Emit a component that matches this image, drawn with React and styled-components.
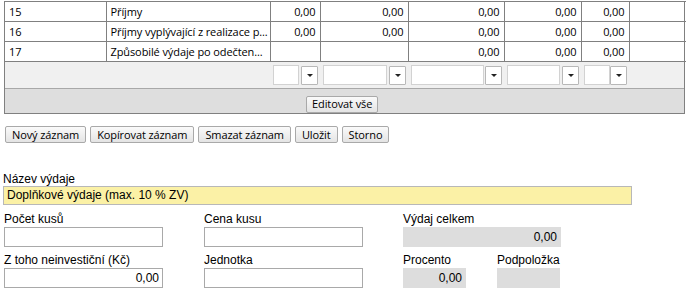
import React from 'react'
import styled, { createGlobalStyle } from 'styled-components'

const GlobalStyle = createGlobalStyle`
  body {
    margin: 0;
    background: #fff;
    font-family: "Open Sans", "DejaVu Sans", sans-serif;
    color: #000;
  }
`

const Page = styled.div`
  width: 690px;
  height: 296px;
  overflow: hidden;
`

const GridWrap = styled.div`
  margin: 1px 5px 0 4px;
  border: 1px solid #808080;
  border-top: none;
`

const Grid = styled.table`
  border-collapse: collapse;
  table-layout: fixed;
  width: 100%;
  font-size: 11px;
  letter-spacing: -0.1px;
`

const Cell = styled.td`
  height: 19px;
  padding: 0 4px;
  border: 1px solid #808080;
  text-align: ${p => (p.$num ? 'right' : 'left')};
  white-space: nowrap;
  overflow: hidden;
  &:first-child { border-left: none; }
  &:last-child { border-right: none; }
`

const FilterRow = styled.div`
  display: grid;
  grid-template-columns: 264px 50px 88px 96px 77px 48px 1fr;
  height: 26px;
  background: #f0f0f0;
  border-bottom: 1px solid #a8a8a8;
`

const FilterCell = styled.div`
  display: flex;
  align-items: center;
  justify-content: space-between;
  padding: 0 1px 0 4px;
`

const FilterInput = styled.div`
  width: ${p => p.$w}px;
  height: 18px;
  background: #fff;
  border: 1px solid #d2d2d2;
`

const DropButton = styled.div`
  width: 15px;
  height: 17px;
  background: #fff;
  border: 1px solid #b8b8b8;
  border-radius: 1px;
  display: flex;
  align-items: center;
  justify-content: center;
  &::after {
    content: '';
    border-left: 3px solid transparent;
    border-right: 3px solid transparent;
    border-top: 3px solid #222;
  }
`

const Footer = styled.div`
  height: 24px;
  background: #dedede;
  display: flex;
  align-items: center;
  padding-left: 301px;
`

const Button = styled.button`
  font-family: "Open Sans", "DejaVu Sans", sans-serif;
  font-size: 11px;
  font-weight: 400;
  letter-spacing: -0.1px;
  color: #000;
  height: 17px;
  padding: 0 6px;
  line-height: 14px;
  background: linear-gradient(#fafafa, #e4e4e4);
  border: 1px solid #a9a9a9;
  border-radius: 2px;
  cursor: pointer;
`

const EditButton = styled(Button)`
  padding: 0 5px;
  margin-top: 6px;
`

const Toolbar = styled.div`
  display: flex;
  gap: 4px;
  margin: 12px 0 0 5px;
`

const Form = styled.div`
  margin: 30px 0 0 3px;
  font-family: "Liberation Sans", Arial, sans-serif;
  font-size: 12px;
`

const Label = styled.div`
  height: 13px;
  line-height: 13px;
  white-space: nowrap;
`

const NameField = styled.div`
  width: 629px;
  height: 19px;
  box-sizing: border-box;
  margin-top: 0;
  background: #fbf1a6;
  border: 1px solid #b8b8b8;
  line-height: 17px;
  padding-left: 3px;
`

const FieldGrid = styled.div`
  display: grid;
  grid-template-columns: 200px 199px 94px 80px;
  row-gap: 7px;
  margin-top: 8px;
  padding-left: 1px;
`

const Field = styled.div`
  grid-column: span ${p => p.$span || 1};
`

const Input = styled.div`
  width: ${p => p.$w}px;
  height: 20px;
  box-sizing: border-box;
  margin-top: 1px;
  background: ${p => (p.$readOnly ? '#dddddd' : '#fff')};
  border: 1px solid ${p => (p.$readOnly ? '#dddddd' : '#a9a9a9')};
  text-align: right;
  line-height: 18px;
  padding-right: 3px;
`

const cols = [101, 164, 50, 88, 96, 77, 48, 57]

const rows = [
  ['15', 'Příjmy', '0,00', '0,00', '0,00', '0,00', '0,00', ''],
  ['16', 'Příjmy vyplývající z realizace p...', '0,00', '0,00', '0,00', '0,00', '0,00', ''],
  ['17', 'Způsobilé výdaje po odečten...', '', '', '0,00', '0,00', '0,00', ''],
]

const filters = [24, 62, 71, 51, 24]

const App = () => {
  return (
    <Page>
      <GlobalStyle />
      <GridWrap>
        <Grid>
          <colgroup>
            {cols.map((w, i) => <col key={i} style={{ width: w }} />)}
          </colgroup>
          <tbody>
            {rows.map(r => (
              <tr key={r[0]}>
                {r.map((v, i) => (
                  <Cell key={i} $num={i > 1}>{v}</Cell>
                ))}
              </tr>
            ))}
          </tbody>
        </Grid>
        <FilterRow>
          <div />
          {filters.map((w, i) => (
            <FilterCell key={i}>
              <FilterInput $w={w} />
              <DropButton />
            </FilterCell>
          ))}
          <div />
        </FilterRow>
        <Footer>
          <EditButton>Editovat vše</EditButton>
        </Footer>
      </GridWrap>

      <Toolbar>
        <Button>Nový záznam</Button>
        <Button>Kopírovat záznam</Button>
        <Button>Smazat záznam</Button>
        <Button>Uložit</Button>
        <Button>Storno</Button>
      </Toolbar>

      <Form>
        <Label>Název výdaje</Label>
        <NameField>Doplňkové výdaje (max. 10 % ZV)</NameField>
        <FieldGrid>
          <Field>
            <Label>Počet kusů</Label>
            <Input $w={159} />
          </Field>
          <Field>
            <Label>Cena kusu</Label>
            <Input $w={159} />
          </Field>
          <Field $span={2}>
            <Label>Výdaj celkem</Label>
            <Input $w={158} $readOnly>0,00</Input>
          </Field>
          <Field>
            <Label>Z toho neinvestiční (Kč)</Label>
            <Input $w={159}>0,00</Input>
          </Field>
          <Field>
            <Label>Jednotka</Label>
            <Input $w={159} />
          </Field>
          <Field>
            <Label>Procento</Label>
            <Input $w={63} $readOnly>0,00</Input>
          </Field>
          <Field>
            <Label>Podpoložka</Label>
            <Input $w={63} $readOnly />
          </Field>
        </FieldGrid>
      </Form>
    </Page>
  )
}

export default App
